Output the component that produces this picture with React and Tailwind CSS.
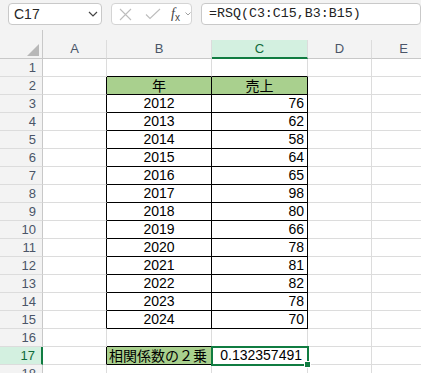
import React from 'react';

const GRID = 'border-[#dcdcdc]';
const sales = [76, 62, 58, 64, 65, 98, 80, 66, 78, 81, 82, 78, 70];

function Cell({ w, bg = 'bg-white', r = GRID, b = GRID, className = '', children }) {
    return (
        <div className={`${w} shrink-0 h-full border-r border-b ${r} ${b} ${bg} ${className}`}>
            {children}
        </div>
    );
}

function RowHead({ n, active }) {
    return (
        <div
            className={`w-[43px] shrink-0 h-full border-b border-[#dcdcdc] pr-[6px] text-right text-[13px] leading-[17px] ${
                active
                    ? 'bg-[#d3f0e0] text-[#0f6b3a] border-r-2 border-r-[#107c41]'
                    : 'bg-[#f3f3f3] text-[#4a5568] border-r border-r-[#c8c8c8]'
            }`}
        >
            {n}
        </div>
    );
}

function Row({ n, children, active }) {
    return (
        <div className="flex h-[18px]">
            <RowHead n={n} active={active} />
            {children}
        </div>
    );
}

export default function App() {
    const num = "font-['Liberation_Sans',Arial,sans-serif] text-[14px] leading-[17px] text-black";
    const jp = "font-['Noto_Sans_CJK_JP',sans-serif] text-[14px] leading-[17px] text-black";

    return (
        <div className="w-[421px] h-[373px] overflow-hidden bg-white font-['Liberation_Sans',Arial,sans-serif]">
            {/* Toolbar */}
            <div className="h-[30px] bg-[#f3f3f3] flex items-start pt-[3px] pl-[8px] gap-[9px]">
                <div className="w-[123px] h-[22px] bg-white border border-[#c9c9c9] rounded-[4px] flex items-center justify-between pl-[5px] pr-[3px]">
                    <span className="text-[14px] text-[#262626]">C17</span>
                    <svg width="10" height="6" viewBox="0 0 10 6">
                        <path d="M1 1L5 5L9 1" stroke="#444" strokeWidth="1.2" fill="none" />
                    </svg>
                </div>
                <div className="w-[86px] h-[22px] bg-white border border-[#d4d4d4] rounded-[4px] flex items-center pl-[7px] relative">
                    <svg width="13" height="13" viewBox="0 0 13 13">
                        <path d="M1 1L12 12M12 1L1 12" stroke="#bdbdbd" strokeWidth="1.1" fill="none" />
                    </svg>
                    <svg width="16" height="12" viewBox="0 0 16 12" className="ml-[13px]">
                        <path d="M1 6.5L5 10.5L15 1" stroke="#bdbdbd" strokeWidth="1.1" fill="none" />
                    </svg>
                    <span className="ml-[10px] font-['Liberation_Serif',serif] italic text-[14px] leading-none text-[#444]">
                        f<span className="text-[10px] not-italic font-['Liberation_Sans',sans-serif] relative top-[3px]">x</span>
                    </span>
                    <svg width="6" height="4" viewBox="0 0 6 4" className="ml-[5px]">
                        <path d="M0.5 0.5L3 3L5.5 0.5" stroke="#a0a0a0" strokeWidth="1" fill="none" />
                    </svg>
                </div>
                <div className="w-[220px] h-[22px] bg-white border border-[#c9c9c9] rounded-[4px] flex items-center pl-[7px] shrink-0">
                    <span className="font-['Liberation_Mono',monospace] text-[13.3px] text-[#222]">=RSQ(C3:C15,B3:B15)</span>
                </div>
            </div>

            {/* Column headers */}
            <div className="flex h-[29px] bg-[#f3f3f3]">
                <div className="w-[43px] shrink-0 border-r border-b border-[#c8c8c8] flex items-end justify-end pr-[3px] pb-[2px]">
                    <svg width="12" height="12" viewBox="0 0 12 12">
                        <polygon points="12,0 12,12 0,12" fill="#b8b8b8" />
                    </svg>
                </div>
                {[
                    ['A', 'w-[64px]'],
                    ['B', 'w-[105px]'],
                    ['C', 'w-[96px]'],
                    ['D', 'w-[64px]'],
                    ['E', 'w-[64px]'],
                ].map(([l, w]) => (
                    <div key={l} className={`${w} shrink-0 flex flex-col justify-end`}>
                        <div
                            className={`h-[19px] text-center text-[13px] leading-[18px] border-r border-[#dcdcdc] ${
                                l === 'C'
                                    ? 'bg-[#d3f0e0] text-[#0f6b3a] border-b-2 border-b-[#107c41]'
                                    : 'text-[#4a5568] border-b border-b-[#c8c8c8]'
                            }`}
                        >
                            {l}
                        </div>
                    </div>
                ))}
            </div>

            {/* Sheet rows */}
            <Row n={1}>
                <Cell w="w-[64px]" />
                <Cell w="w-[105px]" b="border-b-black" />
                <Cell w="w-[96px]" b="border-b-black" />
                <Cell w="w-[64px]" />
                <Cell w="w-[64px]" />
            </Row>
            <Row n={2}>
                <Cell w="w-[64px]" r="border-r-black" />
                <Cell w="w-[105px]" r="border-r-black" b="border-b-black" bg="bg-[#a9d08e]" className={`${jp} text-center`}>年</Cell>
                <Cell w="w-[96px]" r="border-r-black" b="border-b-black" bg="bg-[#a9d08e]" className={`${jp} text-center`}>売上</Cell>
                <Cell w="w-[64px]" />
                <Cell w="w-[64px]" />
            </Row>
            {sales.map((s, i) => (
                <Row key={i} n={i + 3}>
                    <Cell w="w-[64px]" r="border-r-black" />
                    <Cell w="w-[105px]" r="border-r-black" b="border-b-black" className={`${num} text-center`}>{2012 + i}</Cell>
                    <Cell w="w-[96px]" r="border-r-black" b="border-b-black" className={`${num} text-right pr-[3px]`}>{s}</Cell>
                    <Cell w="w-[64px]" />
                    <Cell w="w-[64px]" />
                </Row>
            ))}
            <Row n={16}>
                <Cell w="w-[64px]" />
                <Cell w="w-[105px]" b="border-b-black" />
                <Cell w="w-[96px]" />
                <Cell w="w-[64px]" />
                <Cell w="w-[64px]" />
            </Row>
            <Row n={17} active>
                <Cell w="w-[64px]" r="border-r-black" />
                <Cell w="w-[105px]" r="border-r-black" b="border-b-black" bg="bg-[#a9d08e]" className={`${jp} text-[13.5px] pl-[2px] whitespace-nowrap`}>相関係数の２乗</Cell>
                <Cell w="w-[96px]" className={`${num} text-right pr-[5px] relative`}>
                    0.132357491
                    <div className="absolute -left-[1px] -top-[1px] w-[98px] h-[20px] border-2 border-[#107c41]" />
                    <div className="absolute -right-[4px] -bottom-[4px] w-[7px] h-[7px] bg-[#107c41] border border-white" />
                </Cell>
                <Cell w="w-[64px]" />
                <Cell w="w-[64px]" />
            </Row>
            <Row n={18}>
                <Cell w="w-[64px]" />
                <Cell w="w-[105px]" />
                <Cell w="w-[96px]" />
                <Cell w="w-[64px]" />
                <Cell w="w-[64px]" />
            </Row>
        </div>
    );
}
